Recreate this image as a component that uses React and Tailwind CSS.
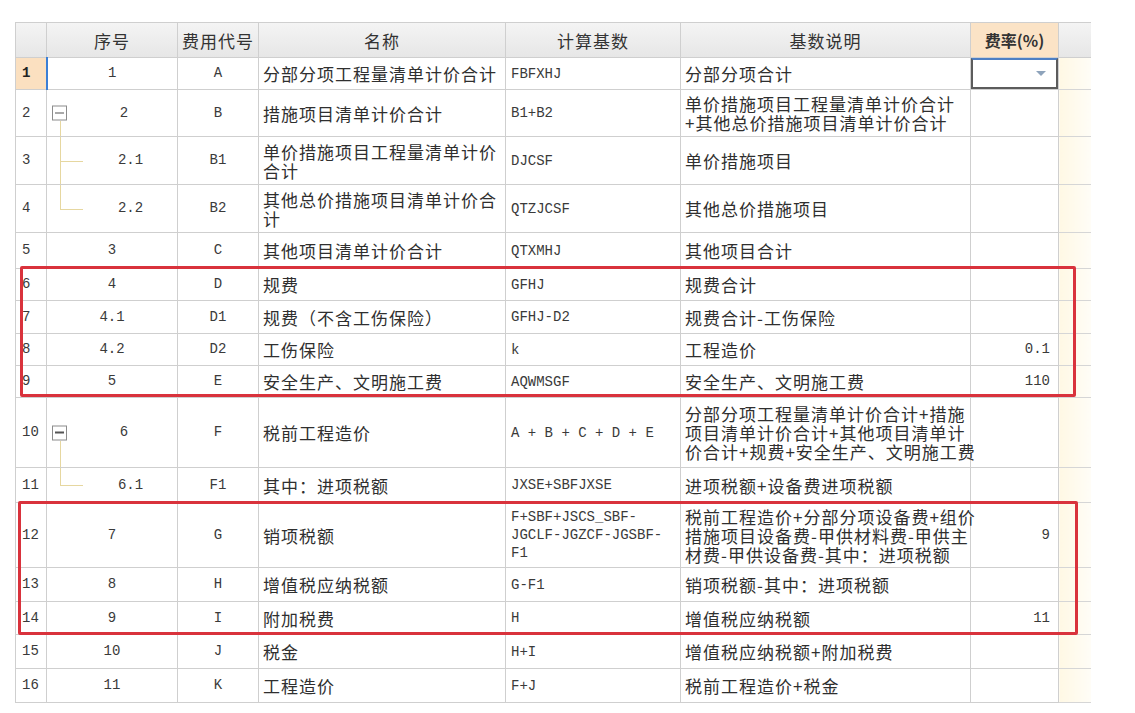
import React from "react"

const rows = [
    { n: "1", seq: "1", code: "A", name: ["分部分项工程量清单计价合计"], base: ["FBFXHJ"], desc: ["分部分项合计"], h: "h-[32px]", dropdown: true },
    { n: "2", seq: "2", tree: "open", code: "B", name: ["措施项目清单计价合计"], base: ["B1+B2"], desc: ["单价措施项目工程量清单计价合计", "+其他总价措施项目清单计价合计"], h: "h-[47px]" },
    { n: "3", seq: "2.1", tree: "mid", code: "B1", name: ["单价措施项目工程量清单计价", "合计"], base: ["DJCSF"], desc: ["单价措施项目"], h: "h-[48px]" },
    { n: "4", seq: "2.2", tree: "last", code: "B2", name: ["其他总价措施项目清单计价合", "计"], base: ["QTZJCSF"], desc: ["其他总价措施项目"], h: "h-[48px]" },
    { n: "5", seq: "3", code: "C", name: ["其他项目清单计价合计"], base: ["QTXMHJ"], desc: ["其他项目合计"], h: "h-[36px]" },
    { n: "6", seq: "4", code: "D", name: ["规费"], base: ["GFHJ"], desc: ["规费合计"], h: "h-[32px]" },
    { n: "7", seq: "4.1", code: "D1", name: ["规费（不含工伤保险）"], base: ["GFHJ-D2"], desc: ["规费合计-工伤保险"], h: "h-[33px]" },
    { n: "8", seq: "4.2", code: "D2", name: ["工伤保险"], base: ["k"], desc: ["工程造价"], rate: "0.1", h: "h-[32px]" },
    { n: "9", seq: "5", code: "E", name: ["安全生产、文明施工费"], base: ["AQWMSGF"], desc: ["安全生产、文明施工费"], rate: "110", h: "h-[32px]" },
    { n: "10", seq: "6", tree: "open", code: "F", name: ["税前工程造价"], base: ["A + B + C + D + E"], desc: ["分部分项工程量清单计价合计+措施", "项目清单计价合计+其他项目清单计", "价合计+规费+安全生产、文明施工费"], h: "h-[70px]" },
    { n: "11", seq: "6.1", tree: "last", code: "F1", name: ["其中：进项税额"], base: ["JXSE+SBFJXSE"], desc: ["进项税额+设备费进项税额"], h: "h-[35px]" },
    { n: "12", seq: "7", code: "G", name: ["销项税额"], base: ["F+SBF+JSCS_SBF-", "JGCLF-JGZCF-JGSBF-", "F1"], desc: ["税前工程造价+分部分项设备费+组价", "措施项目设备费-甲供材料费-甲供主", "材费-甲供设备费-其中：进项税额"], rate: "9", h: "h-[65px]" },
    { n: "13", seq: "8", code: "H", name: ["增值税应纳税额"], base: ["G-F1"], desc: ["销项税额-其中：进项税额"], h: "h-[34px]" },
    { n: "14", seq: "9", code: "I", name: ["附加税费"], base: ["H"], desc: ["增值税应纳税额"], rate: "11", h: "h-[33px]" },
    { n: "15", seq: "10", code: "J", name: ["税金"], base: ["H+I"], desc: ["增值税应纳税额+附加税费"], h: "h-[34px]" },
    { n: "16", seq: "11", code: "K", name: ["工程造价"], base: ["F+J"], desc: ["税前工程造价+税金"], h: "h-[34px]" },
]

const cjk = "font-['Noto_Sans_CJK_SC',sans-serif] text-[17px] tracking-[1px] leading-[19px] text-[#2f2f2f]"
const mono = "font-['Liberation_Mono',monospace] text-[14px] text-[#3a3a3a]"
const cell = "border border-[#cfcfcf] p-0 align-middle"

function Lines({ lines }) {
    return lines.map((l, i) => (
        <div key={i} className="whitespace-nowrap">
            {l}
        </div>
    ))
}

function TreeMark({ kind }) {
    const line = "absolute bg-[#e6d7a0]"
    if (kind === "open") {
        return (
            <>
                <div className="absolute left-[5px] top-1/2 -translate-y-1/2 w-[15px] h-[15px] border border-[#8c8c8c] bg-white flex items-center justify-center">
                    <div className="w-[9px] h-[1.5px] bg-[#555]" />
                </div>
                <div className={`${line} left-[13px] top-[calc(50%+8px)] bottom-0 w-px`} />
            </>
        )
    }
    return (
        <>
            <div className={`${line} left-[13px] top-0 w-px ${kind === "mid" ? "bottom-0" : "h-1/2"}`} />
            <div className={`${line} left-[13px] top-1/2 w-[23px] h-px`} />
        </>
    )
}

export default function App() {
    return (
        <div className="w-[1135px] h-[713px] bg-white relative overflow-hidden">
            <div className="pl-[15px] pt-[22px]">
                <table className="table-fixed border-collapse w-[1075px]">
                    <colgroup>
                        <col className="w-[31px]" />
                        <col className="w-[131px]" />
                        <col className="w-[81px]" />
                        <col className="w-[247px]" />
                        <col className="w-[175px]" />
                        <col className="w-[290px]" />
                        <col className="w-[88px]" />
                        <col className="w-[32px]" />
                    </colgroup>
                    <thead>
                        <tr className="h-[35px] bg-linear-to-b from-[#f4f4f4] to-[#e6e6e6]">
                            <th className={cell} />
                            {["序号", "费用代号", "名称", "计算基数", "基数说明"].map((t) => (
                                <th key={t} className={`${cell} ${cjk} font-normal text-center text-[#333]`}>
                                    {t}
                                </th>
                            ))}
                            <th className={`${cell} bg-[#fbe3c6] font-['Noto_Sans_CJK_SC',sans-serif] text-[16px] font-bold text-[#333] text-center`}>
                                费率(%)
                            </th>
                            <th className="border-y border-[#cfcfcf] p-0" />
                        </tr>
                    </thead>
                    <tbody>
                        {rows.map((r) => (
                            <tr key={r.n} className={r.h}>
                                <td
                                    className={`${cell} pl-[6px] ${mono} ${
                                        r.n === "1" ? "bg-[#fbe0c0] font-bold text-[#222]" : "bg-white"
                                    }`}
                                >
                                    {r.n}
                                </td>
                                <td className={`${cell} relative ${r.n === "1" ? "border-l-2 border-l-[#3b7fd6]" : ""}`}>
                                    {r.tree && <TreeMark kind={r.tree} />}
                                    <div
                                        className={`${mono} text-center ${
                                            r.tree === "open" ? "pl-[24px]" : r.tree ? "pl-[37px]" : ""
                                        }`}
                                    >
                                        {r.seq}
                                    </div>
                                </td>
                                <td className={`${cell} ${mono} text-center`}>{r.code}</td>
                                <td className={`${cell} ${cjk} pl-[4px]`}>
                                    <Lines lines={r.name} />
                                </td>
                                <td className={`${cell} ${mono} pl-[5px] leading-[18px]`}>
                                    <Lines lines={r.base} />
                                </td>
                                <td className={`${cell} ${cjk} pl-[4px]`}>
                                    <Lines lines={r.desc} />
                                </td>
                                <td className={`${cell} ${mono} text-right pr-[8px] relative`}>
                                    {r.dropdown ? (
                                        <div className="absolute inset-0 border-2 border-[#5c5c5c] border-t-[#4d7fc4] bg-white flex items-center justify-end pr-[10px]">
                                            <div className="w-0 h-0 border-l-[5px] border-r-[5px] border-t-[5px] border-l-transparent border-r-transparent border-t-[#8ea3bb]" />
                                        </div>
                                    ) : (
                                        r.rate
                                    )}
                                </td>
                                <td className="border-y border-[#d6d6d6] p-0 bg-linear-to-r from-[#fff8e4] to-[#fffdf7]" />
                            </tr>
                        ))}
                    </tbody>
                </table>
            </div>
            <div className="absolute left-[20px] top-[266px] w-[1056px] h-[131px] border-[3px] border-[#d9323c] rounded-[2px] pointer-events-none" />
            <div className="absolute left-[18px] top-[501px] w-[1060px] h-[134px] border-[3px] border-[#d9323c] rounded-[2px] pointer-events-none" />
        </div>
    )
}
